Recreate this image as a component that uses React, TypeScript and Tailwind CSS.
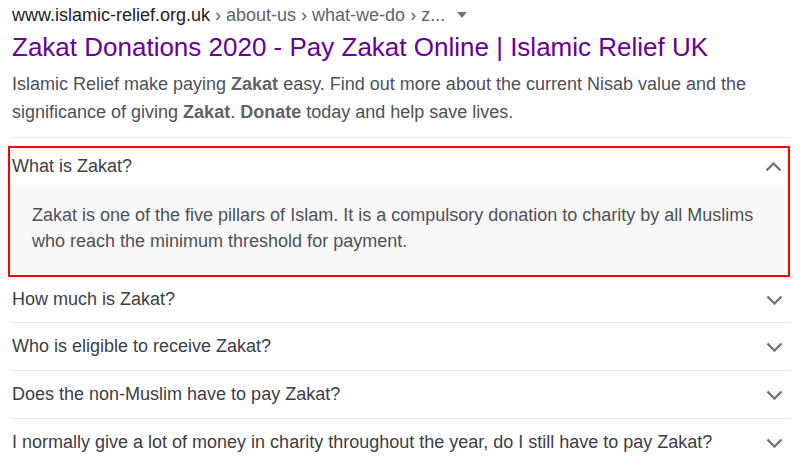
const questions = [
  'How much is Zakat?',
  'Who is eligible to receive Zakat?',
  'Does the non-Muslim have to pay Zakat?',
  'I normally give a lot of money in charity throughout the year, do I still have to pay Zakat?',
];

function Chevron({ up = false }: { up?: boolean }) {
  return (
    <svg width="17" height="10" viewBox="0 0 17 10" className="shrink-0">
      <polyline
        points={up ? '1.5,8.5 8.5,1.5 15.5,8.5' : '1.5,1.5 8.5,8.5 15.5,1.5'}
        fill="none"
        stroke="#70757a"
        strokeWidth="2.4"
      />
    </svg>
  );
}

export default function App() {
  return (
    <div className="w-[800px] h-[465px] bg-white overflow-hidden font-['Liberation_Sans',Arial,sans-serif]">
      <div className="ml-[11px] w-[780px] pt-[5px]">
        {/* url + breadcrumbs */}
        <div className="flex items-center h-5 text-[18px] pl-px">
          <span className="text-[#202124]">www.islamic-relief.org.uk</span>
          <span className="text-[#5f6368]">&nbsp;› about-us › what-we-do › z...</span>
          <svg width="10" height="6" viewBox="0 0 10 6" className="ml-[12px]">
            <path d="M0 0h10L5 6z" fill="#70757a" />
          </svg>
        </div>

        {/* title */}
        <div className="mt-[7px] h-[30px] leading-[30px] text-[26px] text-[#660099] pl-px">
          Zakat Donations 2020 - Pay Zakat Online | Islamic Relief UK
        </div>

        {/* snippet */}
        <p className="mt-[8px] text-[18px] leading-[28px] text-[#4d5156] pl-px">
          Islamic Relief make paying <b className="text-[#5f6368]">Zakat</b> easy. Find out more about the current Nisab value and the
          <br />
          significance of giving <b className="text-[#5f6368]">Zakat</b>. <b className="text-[#5f6368]">Donate</b> today and help save lives.
        </p>

        <div className="mt-[11px] h-px bg-[#ebebeb]" />

        {/* open item */}
        <div className="mt-[8px] -ml-[3px] w-[782px] border-2 border-[#ff0000]">
          <div className="flex items-center justify-between h-[37px] pl-[2px] pr-[6px] text-[18px] text-[#3c4043]">
            <span>What is Zakat?</span>
            <Chevron up />
          </div>
          <div className="bg-[#f8f8f8] pl-[22px] pt-[17px] pb-[21px] text-[18px] leading-[26px] text-[#4d5156]">
            Zakat is one of the five pillars of Islam. It is a compulsory donation to charity by all Muslims
            <br />
            who reach the minimum threshold for payment.
          </div>
        </div>

        {/* other items */}
        {questions.map((q, i) => (
          <div key={q}>
            <div
              className={`flex items-center justify-between pl-px pr-[8px] text-[18px] text-[#3c4043] ${
                i === 0 ? 'h-[45px]' : 'h-[47px]'
              }`}
            >
              <span>{q}</span>
              <Chevron />
            </div>
            {i < questions.length - 1 && <div className="h-px bg-[#ebebeb]" />}
          </div>
        ))}
      </div>
    </div>
  );
}
